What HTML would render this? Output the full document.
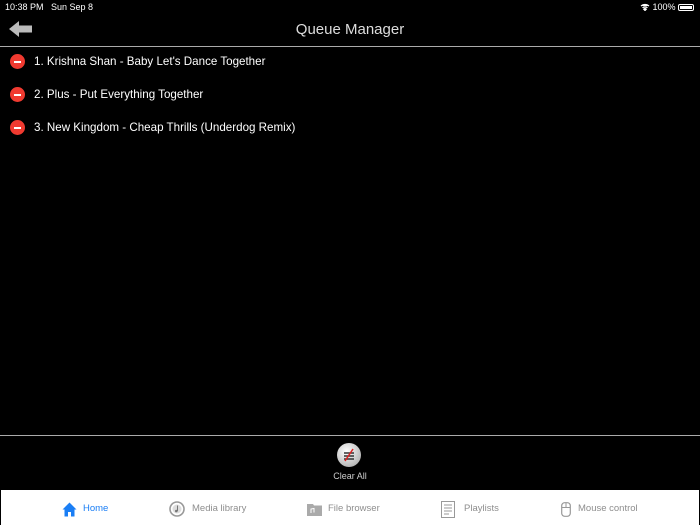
<!DOCTYPE html>
<html><head><meta charset="utf-8"><style>
*{margin:0;padding:0;box-sizing:border-box}
body{width:700px;height:525px;background:#000;font-family:"Liberation Sans",sans-serif;position:relative;overflow:hidden;color:#fff}
.abs{position:absolute}
.st{top:2px;font-size:9px;color:#fff}
.row{position:absolute;left:10px;font-size:11.6px;color:#fff;display:flex;align-items:center}
.dot{width:15px;height:15px;border-radius:50%;background:#f03a30;margin-right:9px;position:relative}
.dot:after{content:"";position:absolute;left:4px;top:7px;width:7px;height:1.5px;background:#fff}
.tab{position:absolute;top:499px;height:20px;font-size:9.5px;line-height:20px;color:#8e8e8e;display:flex;align-items:center}
</style></head><body>
<div class="abs st" style="left:5px">10:38 PM&nbsp;&nbsp;&nbsp;Sun Sep 8</div>
<div class="abs st" style="left:640px;">
<svg width="10" height="8" viewBox="0 0 10 8" style="vertical-align:-1px"><path d="M1 3a6 6 0 0 1 8 0M2.5 4.7a4 4 0 0 1 5 0M5 7.5l-1.3-1.3a2 2 0 0 1 2.6 0z" stroke="#fff" stroke-width="1.2" fill="#fff"/></svg> 100%</div>
<div class="abs" style="left:678px;top:4px;width:16px;height:7px;border:1px solid #fff;border-radius:2px;padding:1px"><div style="background:#fff;width:100%;height:100%"></div></div>
<svg class="abs" style="left:9px;top:21px" width="24" height="16" viewBox="0 0 24 16"><path d="M0 8L10 0V4.5H23V11.5H10V16Z" fill="#bbb"/></svg>
<div class="abs" style="left:0;width:700px;top:21px;text-align:center;font-size:15px;color:#ddd">Queue Manager</div>
<div class="abs" style="left:0;top:46px;width:700px;height:1px;background:#aaa"></div>
<div class="row" style="top:54px"><div class="dot"></div>1. Krishna Shan - Baby Let's Dance Together</div>
<div class="row" style="top:87px"><div class="dot"></div>2. Plus - Put Everything Together</div>
<div class="row" style="top:120px"><div class="dot"></div>3. New Kingdom - Cheap Thrills (Underdog Remix)</div>
<div class="abs" style="left:0;top:435px;width:700px;height:1px;background:#aaa"></div>
<div class="abs" style="left:337px;top:443px;width:24px;height:24px;border-radius:50%;background:radial-gradient(circle at 40% 35%,#fff,#bbb 70%,#888)"></div>
<svg class="abs" style="left:341px;top:447px" width="16" height="16" viewBox="0 0 16 16"><path d="M3 6H13M3 9H13M3 12H13" stroke="#333" stroke-width="1.5"/><path d="M12 2L4 14" stroke="#d22" stroke-width="1.5"/></svg>
<div class="abs" style="left:0;width:700px;top:471px;text-align:center;font-size:9px;color:#ccc">Clear All</div>
<div class="abs" style="left:1px;top:490px;width:698px;height:35px;background:#fff"></div>
<div class="tab" style="left:62px;color:#1a7ef5"><svg width="15" height="15" viewBox="0 0 15 15" style="margin-right:6px"><path d="M7.5 0.5L0.5 7.5H2.5V14.5H6V10H9V14.5H12.5V7.5H14.5Z" fill="#1a7ef5"/></svg>Home</div>
<div class="tab" style="left:169px"><svg width="16" height="16" viewBox="0 0 16 16" style="margin-right:7px"><circle cx="8" cy="8" r="7" fill="none" stroke="#999" stroke-width="1.6"/><circle cx="8" cy="8" r="4.5" fill="#ddd"/><path d="M8.5 4.5V10" stroke="#777"/><circle cx="7.3" cy="10" r="1.3" fill="#777"/></svg>Media library</div>
<div class="tab" style="left:307px"><svg width="15" height="13" viewBox="0 0 15 13" style="margin-right:6px"><path d="M0 1H6L7 2.5H15V13H0Z" fill="#aaa"/><path d="M4 10V6L7 5.5V9.5" stroke="#fff" fill="none"/></svg>File browser</div>
<div class="tab" style="left:441px"><svg width="14" height="17" viewBox="0 0 14 17" style="margin-right:9px"><rect x="0.5" y="0.5" width="13" height="16" fill="none" stroke="#999"/><path d="M3 4H11M3 7H11M3 10H11M3 13H8" stroke="#999"/></svg>Playlists</div>
<div class="tab" style="left:561px"><svg width="10" height="15" viewBox="0 0 10 15" style="margin-right:7px"><rect x="0.7" y="0.7" width="8.6" height="13.6" rx="3" fill="none" stroke="#999" stroke-width="1.2"/><path d="M0.7 5.5H9.3M5 0.7V5.5" stroke="#999"/></svg>Mouse control</div>
</body></html>
